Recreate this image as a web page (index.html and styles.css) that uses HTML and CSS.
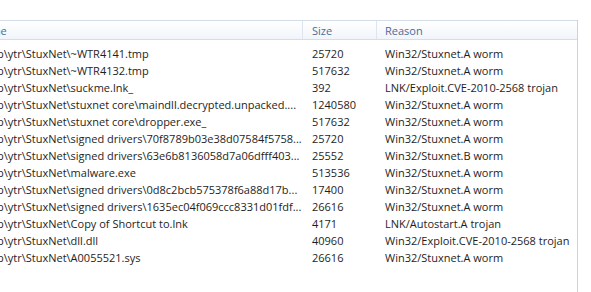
FILE: index.html
```html
<!DOCTYPE html>
<html>
<head>
<meta charset="utf-8">
<link rel="stylesheet" href="styles.css">
</head>
<body>
<div class="list">
  <div class="head">
    <div class="hc c1"><span class="clip">Name</span></div>
    <div class="hc c2">Size</div>
    <div class="hc c3">Reason</div>
  </div>
  <div class="rows">
    <div class="row"><div class="c1"><span class="path">p\ytr\StuxNet\~WTR4141.tmp</span></div><div class="c2">25720</div><div class="c3">Win32/Stuxnet.A worm</div></div>
    <div class="row"><div class="c1"><span class="path">p\ytr\StuxNet\~WTR4132.tmp</span></div><div class="c2">517632</div><div class="c3">Win32/Stuxnet.A worm</div></div>
    <div class="row"><div class="c1"><span class="path">p\ytr\StuxNet\suckme.lnk_</span></div><div class="c2">392</div><div class="c3">LNK/Exploit.CVE-2010-2568 trojan</div></div>
    <div class="row"><div class="c1"><span class="path">p\ytr\StuxNet\stuxnet core\maindll.decrypted.unpacked....</span></div><div class="c2">1240580</div><div class="c3">Win32/Stuxnet.A worm</div></div>
    <div class="row"><div class="c1"><span class="path">p\ytr\StuxNet\stuxnet core\dropper.exe_</span></div><div class="c2">517632</div><div class="c3">Win32/Stuxnet.A worm</div></div>
    <div class="row"><div class="c1"><span class="path">p\ytr\StuxNet\signed drivers\70f8789b03e38d07584f5758...</span></div><div class="c2">25720</div><div class="c3">Win32/Stuxnet.A worm</div></div>
    <div class="row"><div class="c1"><span class="path">p\ytr\StuxNet\signed drivers\63e6b8136058d7a06dfff403...</span></div><div class="c2">25552</div><div class="c3">Win32/Stuxnet.B worm</div></div>
    <div class="row"><div class="c1"><span class="path">p\ytr\StuxNet\malware.exe</span></div><div class="c2">513536</div><div class="c3">Win32/Stuxnet.A worm</div></div>
    <div class="row"><div class="c1"><span class="path">p\ytr\StuxNet\signed drivers\0d8c2bcb575378f6a88d17b...</span></div><div class="c2">17400</div><div class="c3">Win32/Stuxnet.A worm</div></div>
    <div class="row"><div class="c1"><span class="path">p\ytr\StuxNet\signed drivers\1635ec04f069ccc8331d01fdf...</span></div><div class="c2">26616</div><div class="c3">Win32/Stuxnet.A worm</div></div>
    <div class="row"><div class="c1"><span class="path">p\ytr\StuxNet\Copy of Shortcut to.lnk</span></div><div class="c2">4171</div><div class="c3">LNK/Autostart.A trojan</div></div>
    <div class="row"><div class="c1"><span class="path">p\ytr\StuxNet\dll.dll</span></div><div class="c2">40960</div><div class="c3">Win32/Exploit.CVE-2010-2568 trojan</div></div>
    <div class="row"><div class="c1"><span class="path">p\ytr\StuxNet\A0055521.sys</span></div><div class="c2">26616</div><div class="c3">Win32/Stuxnet.A worm</div></div>
  </div>
</div>
</body>
</html>
```
FILE: styles.css
```css
html, body {
  margin: 0;
  padding: 0;
  background: #ffffff;
}
body {
  font-family: "Open Sans", "Noto Sans", sans-serif;
  font-size: 11px;
  color: #1e1e1e;
  overflow: hidden;
  height: 292px;
}
.list {
  margin-top: 20px;
  width: 578px;
  height: 272px;
  border-right: 1px solid #c9d3df;
  box-sizing: border-box;
}
.head {
  display: flex;
  height: 20px;
  box-sizing: border-box;
  border-top: 1px solid #d5dde8;
  border-bottom: 1px solid #d5dde8;
  background: linear-gradient(#ffffff, #f1f5fa);
  color: #4a6b9c;
}
.hc {
  display: flex;
  align-items: center;
  box-sizing: border-box;
  overflow: hidden;
  white-space: nowrap;
}
.head .c1 {
  border-right: 1px solid #dfe5ee;
}
.head .c2 {
  border-right: 1px solid #dfe5ee;
}
.clip {
  margin-left: -24px;
}
.c1 { width: 303px; flex: none; overflow: hidden; white-space: nowrap; }
.c2 { width: 74px; flex: none; padding-left: 9px; box-sizing: border-box; white-space: nowrap; }
.c3 { flex: 1; padding-left: 8px; white-space: nowrap; }
.rows {
  padding-top: 5px;
}
.row {
  display: flex;
  height: 17px;
  align-items: center;
}
.path {
  display: block;
  margin-left: -3px;
}
```
